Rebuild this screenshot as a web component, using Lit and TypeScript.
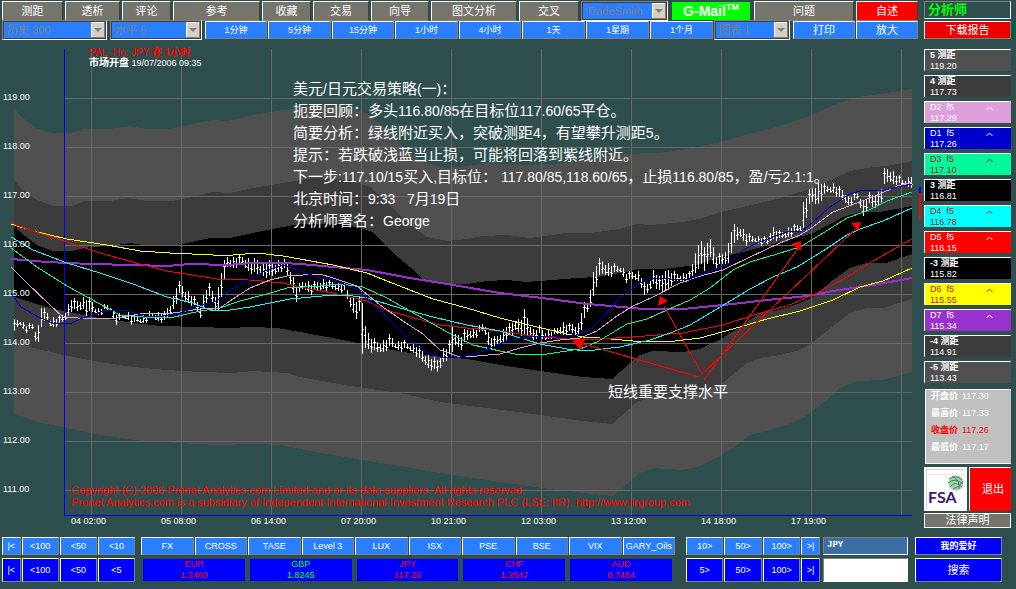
import { LitElement, html, svg, css } from "lit";
import { customElement } from "lit/decorators.js";

type Point = [number, number];

const parse = (source: string): Point[] =>
  source.split(" ").map((pair) => pair.split(",").map(Number) as Point);

// Channel edges, top to bottom: outer, middle and inner band.
const outerTop =
  "14,108 21,117 38,129 53,133 72,133 83,129 110,129 130,126 147,129 170,129 187,125 212,120 228,121 253,115 283,110 297,108 330,105 350,108 367,113 383,127 410,153 425,163 447,168 467,166 487,163 533,165 567,163 587,160 620,154 660,153 693,148 720,142 753,133 783,125 810,116 833,105 857,97 880,94 912,89";
const outerBottom =
  "14,413 37,422 67,428 100,435 143,441 180,443 217,445 253,444 280,445 300,449 350,458 400,466 440,473 500,482 550,489 593,494 613,496 627,484 640,473 653,468 683,470 700,466 720,456 733,448 750,435 763,432 787,425 803,418 817,408 840,388 857,381 883,380 912,372";
const middleTop =
  "14,180 21,189 37,200 53,206 72,206 85,201 110,201 128,198 147,201 173,201 197,196 212,192 230,193 253,188 283,183 313,178 350,180 370,187 387,203 410,225 427,237 447,241 467,239 483,236 507,235 530,238 567,233 590,233 620,229 637,224 650,225 683,222 703,218 717,213 743,207 777,199 813,188 833,179 850,171 867,168 893,165 912,161";
const middleBottom =
  "14,341 30,347 63,355 100,362 133,367 167,370 200,372 233,373 253,371 287,373 300,377 350,386 400,393 440,402 487,408 533,414 583,421 612,424 620,417 637,402 650,397 687,397 703,392 720,385 747,363 760,358 780,355 800,350 813,342 837,323 850,313 867,308 883,308 912,299";
const innerTop =
  "14,224 21,233 37,245 53,251 72,251 90,247 110,246 130,243 143,245 177,245 187,243 210,238 230,238 253,233 283,227 300,224 340,224 360,228 372,232 393,253 410,267 423,279 443,284 467,284 487,281 507,280 527,282 577,278 597,277 620,273 638,269 663,269 697,265 717,258 743,252 773,244 813,233 843,217 860,212 880,212 912,206";
const innerBottom =
  "14,297 27,301 53,309 93,317 127,322 160,326 200,327 227,328 253,327 277,328 300,332 327,337 357,343 403,352 433,356 467,359 507,366 547,372 583,377 612,379 630,363 640,355 653,351 683,352 700,349 723,338 743,325 760,313 780,310 800,303 813,297 833,280 850,268 867,263 887,263 912,254";

const averages = [
  { name: "d7", points: "11,259 23,260 47,262 90,264 133,265 167,266 190,264 227,265 253,263 283,263 300,264 333,267 367,270 410,278 447,284 500,293 550,299 587,304 600,305 643,309 683,309 733,304 767,300 807,296 833,291 873,285 912,278" },
  { name: "d6", points: "11,224 33,231 67,239 107,245 140,251 170,253 213,255 233,255 257,253 283,256 300,259 333,265 367,273 387,281 433,299 467,308 500,318 533,326 567,334 583,337 600,338 633,341 667,342 700,338 733,329 767,319 800,311 833,300 860,287 883,281 912,268" },
  { name: "d5", points: "11,223 33,231 67,242 100,253 140,264 167,271 217,279 250,280 283,283 300,287 333,293 367,301 383,309 407,316 440,325 467,328 500,331 533,336 567,339 600,339 633,337 683,333 723,325 757,314 787,306 813,295 847,277 873,261 912,239" },
  { name: "d4", points: "11,237 33,250 67,263 100,273 133,284 167,297 193,303 210,310 230,310 250,307 290,299 333,295 353,296 367,298 400,308 433,317 467,325 500,331 517,337 540,344 567,349 587,351 603,349 620,347 650,340 673,332 690,325 727,303 750,289 773,277 797,267 823,251 847,235 860,229 883,221 912,208" },
  { name: "d3", points: "11,248 37,267 67,286 100,304 120,315 143,317 170,318 200,311 220,308 240,301 267,294 287,288 320,286 340,284 363,287 387,298 417,315 447,332 473,345 500,351 520,355 547,354 580,349 597,342 617,330 627,324 647,319 667,310 690,300 710,288 733,270 750,262 767,257 800,247 820,235 847,218 867,211 887,201 912,192" },
  { name: "d2", points: "11,267 25,281 50,305 63,317 93,319 117,318 140,314 173,313 200,309 220,308 233,299 250,288 270,280 287,276 320,274 333,278 357,286 380,305 403,321 423,334 440,350 460,357 477,356 500,354 520,348 540,343 560,340 580,338 597,331 617,316 633,306 653,297 680,283 697,277 723,270 750,257 780,243 800,235 813,227 833,212 857,203 880,194 897,186 912,182" },
  { name: "d1", points: "11,293 21,307 40,318 53,323 70,324 80,319 93,315 107,310 127,310 143,316 163,316 180,313 193,308 217,301 230,290 243,283 267,270 283,265 300,271 320,278 333,280 353,288 363,295 387,317 410,340 427,353 440,357 453,358 473,355 490,348 507,341 530,337 560,336 577,335 590,330 603,317 620,298 640,283 653,278 687,280 703,274 730,263 743,250 757,243 787,232 802,231 813,222 830,207 850,194 863,190 880,191 897,187 912,184" },
];

// x : high - low of the price, at the turning points of the session.
const ranges: [number, number, number][] =
  "14,320,333 17,319,328 20,319,325 26,324,331 32,323,330 35,329,341 38,325,341 41,306,325 47,312,321 50,318,326 60,316,325 65,310,320 71,298,310 77,300,312 83,297,308 85,298,318 90,298,312 97,309,314 105,304,311 111,305,310 114,313,320 117,313,325 120,315,320 127,311,318 132,315,324 140,316,323 150,312,319 160,312,320 163,313,323 170,303,315 174,293,305 177,283,300 180,282,293 183,287,300 190,293,303 195,298,308 200,305,318 203,295,308 208,283,297 210,285,298 214,295,308 217,293,315 220,275,298 223,264,288 226,256,268 232,257,267 240,255,265 247,258,269 252,260,273 256,258,275 262,265,274 268,260,277 272,263,277 279,260,270 284,260,270 288,264,278 293,277,292 297,287,302 300,282,290 306,280,290 312,283,293 318,281,291 322,279,288 328,281,289 334,281,290 340,283,290 344,284,292 348,290,303 352,297,310 356,300,317 360,296,312 362,302,355 366,330,346 372,338,352 378,342,353 384,340,350 390,334,348 396,342,348 402,340,350 408,343,350 414,344,352 420,348,362 426,354,366 432,358,370 438,359,373 442,348,362 448,346,357 452,325,353 456,333,342 460,337,349 463,330,345 470,328,338 476,328,336 480,325,333 484,321,331 487,330,342 492,338,350 496,336,345 502,330,343 506,325,338 512,322,336 516,318,328 520,320,333 524,310,336 530,324,336 534,330,340 538,325,334 543,330,341 550,330,337 556,328,335 562,322,334 568,324,333 574,322,335 577,328,336 580,313,330 584,303,320 588,302,310 591,280,305 594,268,290 597,262,282 600,258,275 606,263,275 612,264,275 620,265,272 627,273,282 633,270,280 640,272,280 643,283,298 648,283,293 653,270,283 660,278,293 665,268,290 672,272,283 680,273,281 690,272,280 695,250,273 701,239,262 704,248,273 710,236,257 715,255,267 723,253,265 728,243,263 732,225,247 740,226,237 747,233,245 753,235,242 767,237,245 772,226,238 780,232,240 790,226,235 800,223,232 803,202,227 810,188,202 817,184,205 820,182,200 827,185,193 833,183,192 840,188,200 850,195,205 857,192,200 863,200,215 870,192,203 873,195,210 881,187,202 883,170,187 888,167,182 895,173,183 902,179,186 912,175,186"
    .split(" ")
    .map((entry) => entry.split(",").map(Number) as [number, number, number]);

const rangeAt = (x: number): [number, number] => {
  let i = 0;
  while (i < ranges.length - 2 && ranges[i + 1][0] < x) i++;
  const [x0, h0, l0] = ranges[i];
  const [x1, h1, l1] = ranges[i + 1];
  const t = Math.max(0, Math.min(1, (x - x0) / (x1 - x0)));
  return [h0 + (h1 - h0) * t, l0 + (l1 - l0) * t];
};

// One open-high-low-close bar every three units, a tick to each side.
const bars = (): string => {
  let path = "";
  for (let n = 0; n < 300; n++) {
    const x = 14 + n * 3;
    const [high, low] = rangeAt(x);
    const top = Math.round(high + ((n * 7) % 5) - 1);
    const bottom = Math.round(low + ((n * 11) % 5) - 2);
    const open = Math.round(top + (bottom - top) * (0.3 + ((n * 3) % 5) / 10));
    const close = Math.round(top + (bottom - top) * (0.3 + ((n * 2) % 5) / 10));
    path += `M${x}.5 ${top}V${bottom}M${x - 1} ${open}.5H${x + 1}M${x} ${close}.5H${x + 2}`;
  }
  return path;
};

const band = (top: string, bottom: string): string =>
  [...parse(top), ...parse(bottom).reverse()].map((p) => p.join(",")).join(" ");

const priceLabels = ["119.00", "118.00", "117.00", "116.00", "115.00", "114.00", "113.00", "112.00", "111.00"];
const timeLabels = ["04 02:00", "05 08:00", "06 14:00", "07 20:00", "10 21:00", "12 03:00", "13 12:00", "14 18:00", "17 19:00"];

const notes = [
  "美元/日元交易策略(一)：",
  "扼要回顾：多头116.80/85在目标位117.60/65平仓。",
  "简要分析：绿线附近买入，突破测距4，有望攀升测距5。",
  "提示：若跌破浅蓝当止损，可能将回落到紫线附近。",
  "下一步:117.10/15买入,目标位： 117.80/85,118.60/65，止损116.80/85，盈/亏2.1:1。",
  "北京时间：9:33   7月19日",
  "分析师署名：George",
];

// Latin runs are set one size smaller than the Chinese around them.
const mixed = (line: string) =>
  (line.match(/[\x20-\x7e]+|[^\x20-\x7e]+/g) ?? []).map((run) =>
    /[\x20-\x7e]/.test(run[0]) ? svg`<tspan class="latin">${run}</tspan>` : svg`<tspan>${run}</tspan>`
  );

const levels = [
  { key: "l5", name: "5 测距", value: "119.20" },
  { key: "l4", name: "4 测距", value: "117.73" },
  { key: "d2", name: "D2  f5", value: "117.29", up: true },
  { key: "d1", name: "D1  f5", value: "117.26", up: true },
  { key: "d3", name: "D3  f5", value: "117.10", up: true },
  { key: "l3", name: "3 测距", value: "116.81" },
  { key: "d4", name: "D4  f5", value: "116.78", up: true },
  { key: "d5", name: "D5  f5", value: "116.15", up: true },
  { key: "l3", name: "-3 测距", value: "115.82" },
  { key: "d6", name: "D6  f5", value: "115.55", up: true },
  { key: "d7", name: "D7  f5", value: "115.34", up: true },
  { key: "l4", name: "-4 测距", value: "114.91" },
  { key: "l5", name: "-5 测距", value: "113.43" },
];

const rates = [
  ["EUR", "1.2480"],
  ["GBP", "1.8245"],
  ["JPY", "117.26"],
  ["CHF", "1.2547"],
  ["AUD", "0.7454"],
];

@customElement("price-chart")
class PriceChart extends LitElement {
  static styles = css`
    :host {
      display: block;
    }
    svg {
      display: block;
      width: 100%;
      height: auto;
      overflow: visible;
      font-family: "Liberation Sans", "Noto Sans CJK SC", sans-serif;
    }
    .outer { fill: #505050; }
    .middle { fill: #3c3c3c; }
    .inner { fill: #000; }
    .grid { stroke: #696969; fill: none; shape-rendering: crispEdges; }
    .frame { stroke: #00f; fill: none; shape-rendering: crispEdges; }
    .average { fill: none; shape-rendering: crispEdges; }
    .d1 { stroke: #0000cd; }
    .d2 { stroke: #dda0dd; }
    .d3 { stroke: #00fa9a; }
    .d4 { stroke: #0ff; }
    .d5 { stroke: #f00; }
    .d6 { stroke: #ff0; }
    .d7 { stroke: #9932cc; stroke-width: 2; }
    .bars { stroke: #fff; fill: none; shape-rendering: crispEdges; }
    .arrow { stroke: #f00; fill: none; shape-rendering: crispEdges; }
    .head, .down { fill: #f00; }
    .up { fill: #00f; }
    .small { font-size: 9px; fill: #fff; }
    .title { font-size: 10px; fill: #f00; }
    .heavy { font-size: 10px; font-weight: 700; }
    .notice { font-size: 11px; fill: #f00; }
    .note { font-size: 15px; fill: #fff; white-space: pre; }
    .latin { font-size: 14px; }
  `;

  render() {
    return html`
      <svg viewBox="2 42 916 488" role="img" aria-label="JPY 1小时">
        <polygon class="outer" points=${band(outerTop, outerBottom)} shape-rendering="crispEdges"></polygon>
        <polygon class="middle" points=${band(middleTop, middleBottom)} shape-rendering="crispEdges"></polygon>
        <polygon class="inner" points=${band(innerTop, innerBottom)} shape-rendering="crispEdges"></polygon>
        ${timeLabels.concat("").map((_, i) => svg`<path class="grid" d="M${91 + i * 90}.5 49V515"></path>`)}
        ${priceLabels.map((_, i) => svg`<path class="grid" d="M64 ${98 + i * 49}.5H912"></path>`)}
        <path class="frame" d="M64.5 49V515.5H912"></path>
        <path class="bars" d=${bars()}></path>
        ${averages.map((a) => svg`<polyline class="average ${a.name}" points=${a.points}></polyline>`)}
        <path class="arrow" d="M580 343L699 377M664 306L702 374M799 247L704 380M858 227L703 373"></path>
        <path class="head" d="M572 341L585 338L581 350ZM658 306L660 296L668 301ZM791 244L801 241V251ZM851 223L861 222L858 231Z"></path>
        <rect class="up" x="919" y="187" width="2" height="6"></rect>
        <rect class="down" x="919" y="193" width="2" height="26"></rect>
        ${priceLabels.map((label, i) => svg`<text class="small" x="3" y=${100 + i * 49}>${label}</text>`)}
        ${timeLabels.map((label, i) => svg`<text class="small" x=${71 + i * 90} y="524">${label}</text>`)}
        <text class="title" x="89" y="56">PAL_Hu: JPY <tspan class="heavy">在 1小时</tspan></text>
        <text class="small" x="89" y="66"><tspan class="heavy">市场开盘</tspan> 19/07/2006 09:35</text>
        <text class="notice" x="71" y="494">Copyright (C) 2006 Pronet Analytics.com Limited and or its data suppliers.  All rights reserved.</text>
        <text class="notice" x="71" y="506">Pronet Analytics.com is a subsidiary of Independent International Investment Research PLC (LSE: IIR). http://www.iirgroup.com</text>
        ${notes.map((line, i) => svg`<text class="note" x="293" y=${94 + i * 22}>${mixed(line)}</text>`)}
        <text class="note" x="608" y="397">短线重要支撑水平</text>
      </svg>
    `;
  }
}

@customElement("app-root")
class AppRoot extends LitElement {
  static styles = css`
    :host {
      display: block;
      min-height: 100vh;
      background: #2f4f4f;
      color: #fff;
      font-family: "Liberation Sans", "Noto Sans CJK SC", sans-serif;
      font-size: 9px;
      overflow: hidden;
    }
    * { box-sizing: border-box; }
    button, select, input {
      font: inherit;
      color: inherit;
      margin: 0;
      padding: 0;
      min-width: 0;
      border-radius: 0;
    }
    button {
      border: 1px solid;
      border-color: #fff #808080 #808080 #fff;
      background: #2a7fff;
      white-space: nowrap;
      overflow: hidden;
      line-height: 12px;
    }
    .workspace {
      display: grid;
      grid-template-columns: minmax(0, 1fr) 87px;
      column-gap: 6px;
      padding: 1px 5px 0 2px;
    }
    .tools, .periods { display: grid; }
    .tools {
      grid-template-columns: 61fr 55fr 49fr 87fr 49fr 56fr 58fr 86fr 60fr 89fr 80fr 100fr 62fr;
      column-gap: 2px;
      height: 18px;
      font-size: 11px;
    }
    .tools button { background: #75756b; border-right-color: #404040; }
    .tools .mail {
      background: #0f0;
      border: 0;
      font-size: 14px;
      font-weight: 700;
      line-height: 16px;
      margin: 1px 2px 1px 0;
    }
    .mail sup { font-size: 9px; line-height: 1px; }
    .tools .about { background: #f00; }
    .periods {
      grid-template-columns: 107fr 94fr 62fr 63fr 62fr 63fr 62fr 63fr 63fr 63fr 78fr 62fr 62fr;
      column-gap: 1px;
      height: 20px;
      margin-top: 1px;
    }
    .periods button { margin: 1px 0; }
    .periods .large { font-size: 11px; }
    .pick {
      display: grid;
      grid-template-columns: minmax(0, 1fr) 15px;
      border: 1px solid;
      border-color: #808080 #fff #fff #808080;
      background: #2a7fff;
      font-size: 11px;
      margin-right: 2px;
    }
    .pick select {
      grid-area: 1 / 1 / 2 / 3;
      appearance: none;
      border: 1px solid #404040;
      background: transparent;
      color: #808080;
      padding-left: 3px;
      height: 100%;
    }
    .drop {
      grid-area: 1 / 2;
      width: 100%;
      height: 100%;
      pointer-events: none;
      padding: 1px 0;
    }
    aside { display: flex; flex-direction: column; }
    .analyst {
      height: 18px;
      border: 1px solid;
      border-color: #808080 #fff #fff #808080;
      color: #0f0;
      font-size: 13px;
      font-weight: 700;
      line-height: 15px;
      padding-left: 3px;
      white-space: nowrap;
    }
    .report {
      height: 18px;
      margin-top: 2px;
      background: #e00;
      box-shadow: 5px 0 #0b5d3b;
      font-size: 11px;
    }
    .levels {
      list-style: none;
      margin: 10px 0 6px;
      padding: 0;
      display: grid;
      gap: 4px;
    }
    .level {
      display: grid;
      grid-template-columns: minmax(0, 1fr) 8px;
      height: 22px;
      line-height: 10px;
      padding: 0 17px 0 5px;
      border: solid #fff;
      border-width: 1px 0 0 1px;
      white-space: pre;
    }
    .level strong { font-weight: 400; }
    .level .value { grid-column: 1; }
    .caret { width: 7px; height: 5px; margin-top: 4px; fill: none; stroke: currentColor; }
    .l5 { background: #505050; }
    .l4 { background: #3c3c3c; }
    .l3 { background: #000; }
    .l5 strong, .l4 strong, .l3 strong { font-weight: 700; }
    .d1 { background: #0000cd; }
    .d2 { background: #dda0dd; }
    .d3 { background: #00fa9a; color: #b22222; }
    .d4 { background: #0ff; color: #b22222; }
    .d5 { background: #f00; }
    .d6 { background: #ff0; color: #b22222; }
    .d7 { background: #9932cc; }
    .quote {
      height: 75px;
      margin: 0 0 3px 1px;
      padding: 0 5px;
      border: 1px solid #fff;
      border-right: 0;
      background: #c0c0c0;
      display: grid;
      grid-auto-rows: 17px;
      line-height: 13px;
      align-items: start;
    }
    .quote div { display: flex; gap: 4px; white-space: nowrap; }
    .quote dt { font-weight: 700; }
    .quote dd { margin: 0; }
    .quote .close { color: #f00; }
    .badges {
      display: grid;
      grid-template-columns: 43fr 42fr;
      gap: 2px;
      height: 44px;
    }
    .fsa { background: #fff; display: block; }
    .fsa svg { display: block; width: 100%; height: 44px; }
    .badges .exit {
      background: #f00;
      border-color: #fff #f00 #f00 #fff;
      font-size: 11px;
      padding-left: 6px;
    }
    .legal {
      margin-top: 2px;
      background: #75756b;
      border-color: #fff;
      font-size: 11px;
      line-height: 13px;
      overflow: visible;
    }
    price-chart { margin-top: 2px; }
    footer {
      display: grid;
      grid-template-columns: 136fr 542fr 134fr 89fr 87fr;
      grid-template-rows: 18px 24px;
      gap: 3px;
      padding: 7px 14px 7px 2px;
      line-height: 12px;
    }
    .steps, .markets, .rates { display: grid; }
    .steps { grid-template-columns: 19fr 38fr 38fr 38fr; column-gap: 1px; }
    .back { margin-right: 3px; }
    .forward { grid-template-columns: 38fr 38fr 38fr 19fr; }
    .markets {
      grid-template-columns: repeat(10, minmax(0, 1fr));
      column-gap: 1px;
      margin-right: 8px;
    }
    .rates {
      grid-template-columns: repeat(5, minmax(0, 1fr));
      column-gap: 5px;
      margin: 1px 11px 1px 2px;
      line-height: 11px;
      text-align: center;
    }
    .rate { background: #00f; color: #f00; }
    .rate.rising { color: #0f0; }
    .rate span { display: block; }
    .strong { background: #00f; }
    .field {
      width: 100%;
      height: 100%;
      border: 1px solid;
      border-color: #808080 #fff #fff #808080;
      padding: 0 3px;
      background: #fff;
      color: #000;
    }
    .slot { margin-right: 4px; }
    .symbol {
      background: #3a6ea5;
      color: #fff;
      font-family: "Liberation Mono", monospace;
      font-weight: 700;
      padding-bottom: 3px;
    }
    .favourites { font-weight: 700; }
    .search { font-size: 11px; }
  `;

  private pick(label: string, value: string) {
    return html`
      <label class="pick">
        <select aria-label=${label}><option>${value}</option></select>
        <svg class="drop" viewBox="0 0 15 16" preserveAspectRatio="none" aria-hidden="true">
          <rect x="0" y="0" width="14" height="16" fill="#d4d0c8"></rect>
          <path d="M.5 16V.5H14" fill="none" stroke="#fff"></path>
          <path d="M0 15.500H13.500V0" fill="none" stroke="#808080"></path>
          <path d="M3 6H11L7 10Z" fill="#808080"></path>
        </svg>
      </label>
    `;
  }

  private buttons(labels: string[], kind = "") {
    return labels.map((label) => html`<button type="button" class=${kind}>${label}</button>`);
  }

  render() {
    return html`
      <div class="workspace">
        <main>
          <nav class="tools">
            ${this.buttons(["测距", "透析", "评论", "参考", "收藏", "交易", "向导", "图文分析", "交叉"])}
            ${this.pick("TradeSmith", "TradeSmith")}
            <button type="button" class="mail">G-Mail<sup>TM</sup></button>
            <button type="button">问题</button>
            <button type="button" class="about">自述</button>
          </nav>
          <nav class="periods">
            ${this.pick("历史", "历史 300")} ${this.pick("水平", "水平 5")}
            ${this.buttons(["1分钟", "5分钟", "15分钟", "1小时", "4小时", "1天", "1星期", "1个月"])}
            ${this.pick("图表", "图表 1")}
            ${this.buttons(["打印", "放大"], "large")}
          </nav>
          <price-chart></price-chart>
        </main>
        <aside>
          <div class="analyst">分析师</div>
          <button type="button" class="report">下载报告</button>
          <ul class="levels">
            ${levels.map(
              (level) => html`<li class="level ${level.key}"><strong>${level.name}</strong>${level.up
                ? html`<svg class="caret" viewBox="0 0 7 5" aria-hidden="true"><path d="M.5 4L3.500 1L6.500 4"></path></svg>`
                : ""}<span class="value">${level.value}</span></li>`
            )}
          </ul>
          <dl class="quote">
            <div><dt>开盘价</dt><dd>117.30</dd></div>
            <div><dt>最高价</dt><dd>117.33</dd></div>
            <div class="close"><dt>收盘价</dt><dd>117.26</dd></div>
            <div><dt>最低价</dt><dd>117.17</dd></div>
          </dl>
          <div class="badges">
            <a class="fsa" href="#fsa" aria-label="FSA">
              <svg viewBox="0 0 43 44">
                <path d="M2.500 42V2.500H41" fill="none" stroke="#d4d0c8"></path>
                <path d="M3 7.500H40" stroke="#e8e6e2"></path>
                <circle cx="32" cy="16" r="7.500" fill="#a9cdb2"></circle>
                <path d="M25 12Q32 7 38 13M24 16Q31 10 39 17M26 20Q31 13 38 20M29 22Q36 20 39 14M28 9Q37 14 35 22" fill="none" stroke="#3f8a5a"></path>
                <text x="4" y="36" fill="#3b1a6b" font-family="Lato, sans-serif" font-weight="700" font-size="16">FSA</text>
              </svg>
            </a>
            <button type="button" class="exit">退出</button>
          </div>
          <button type="button" class="legal">法律声明</button>
        </aside>
      </div>
      <footer>
        <div class="steps back">${this.buttons(["|<", "<100", "<50", "<10"])}</div>
        <div class="markets">
          ${this.buttons(["FX", "CROSS", "TASE", "Level 3", "LUX", "ISX", "PSE", "BSE", "VIX", "GARY_Oils"])}
        </div>
        <div class="steps forward">${this.buttons(["10>", "50>", "100>", ">|"])}</div>
        <div class="slot"><input class="field symbol" aria-label="货币" .value=${"JPY"} /></div>
        <button type="button" class="strong favourites">我的爱好</button>
        <div class="steps back">${this.buttons(["|<", "<100", "<50", "<5"], "strong")}</div>
        <div class="rates">
          ${rates.map(
            ([name, value]) => html`<div class="rate ${name === "GBP" ? "rising" : ""}"><span>${name}</span><span>${value}</span></div>`
          )}
        </div>
        <div class="steps forward">${this.buttons(["5>", "50>", "100>", ">|"], "strong")}</div>
        <div class="slot"><input class="field" aria-label="搜索" /></div>
        <button type="button" class="strong search">搜索</button>
      </footer>
    `;
  }
}
